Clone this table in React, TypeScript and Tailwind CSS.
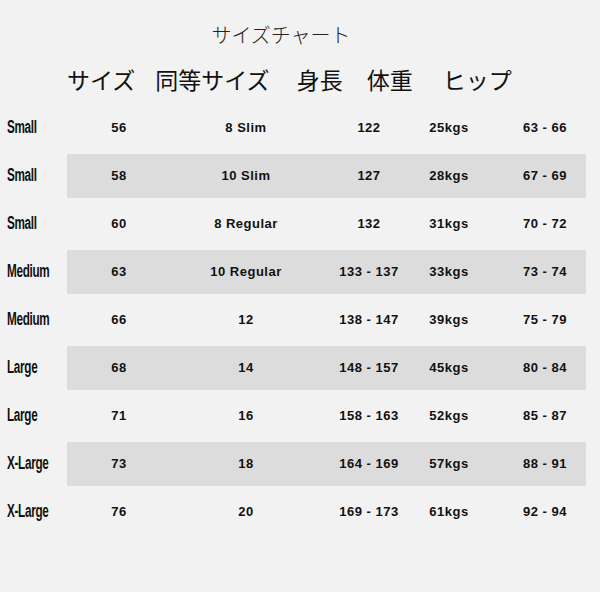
import React from "react";

interface SizeRow {
  label: string;
  chest: string;
  equiv: string;
  height: string;
  weight: string;
  hip: string;
}

const rows: SizeRow[] = [
  { label: "Small", chest: "56", equiv: "8 Slim", height: "122", weight: "25kgs", hip: "63 - 66" },
  { label: "Small", chest: "58", equiv: "10 Slim", height: "127", weight: "28kgs", hip: "67 - 69" },
  { label: "Small", chest: "60", equiv: "8 Regular", height: "132", weight: "31kgs", hip: "70 - 72" },
  { label: "Medium", chest: "63", equiv: "10 Regular", height: "133 - 137", weight: "33kgs", hip: "73 - 74" },
  { label: "Medium", chest: "66", equiv: "12", height: "138 - 147", weight: "39kgs", hip: "75 - 79" },
  { label: "Large", chest: "68", equiv: "14", height: "148 - 157", weight: "45kgs", hip: "80 - 84" },
  { label: "Large", chest: "71", equiv: "16", height: "158 - 163", weight: "52kgs", hip: "85 - 87" },
  { label: "X-Large", chest: "73", equiv: "18", height: "164 - 169", weight: "57kgs", hip: "88 - 91" },
  { label: "X-Large", chest: "76", equiv: "20", height: "169 - 173", weight: "61kgs", hip: "92 - 94" },
];

export default function App() {
  return (
    <div className="w-[600px] h-[600px] bg-white">
      <div className="h-[592px] bg-[#f2f2f2] pt-[21px] font-['Noto_Sans_CJK_JP',sans-serif]">
        <div className="w-[562px] text-center text-[20px] leading-[28px] font-light text-[#222]">
          サイズチャート
        </div>

        <div className="mt-[14px] flex pl-[67px] text-[23px] leading-[32px] text-[#111]">
          <span>サイズ</span>
          <span className="ml-[20px]">同等サイズ</span>
          <span className="ml-[27px]">身長</span>
          <span className="ml-[24px]">体重</span>
          <span className="ml-[30px]">ヒップ</span>
        </div>

        <div className="mt-[9px] font-['Liberation_Sans',Arial,sans-serif] text-[#111]">
          {rows.map((row, i) => (
            <div key={i} className="flex h-[48px] items-center">
              <div className="w-[67px] pl-[7px] whitespace-nowrap">
                <span className="inline-block origin-left scale-x-[0.65] whitespace-nowrap text-[18px] font-bold leading-none tracking-tight">
                  {row.label}
                </span>
              </div>
              <div
                className={`grid h-[44px] w-[519px] grid-cols-[104px_150px_96px_64px_105px] items-center whitespace-nowrap text-center text-[13px] font-bold tracking-[0.5px] ${
                  i % 2 === 1 ? "bg-[#dcdcdc]" : ""
                }`}
              >
                <span>{row.chest}</span>
                <span>{row.equiv}</span>
                <span>{row.height}</span>
                <span>{row.weight}</span>
                <span className="pl-[23px]">{row.hip}</span>
              </div>
            </div>
          ))}
        </div>
      </div>
    </div>
  );
}
